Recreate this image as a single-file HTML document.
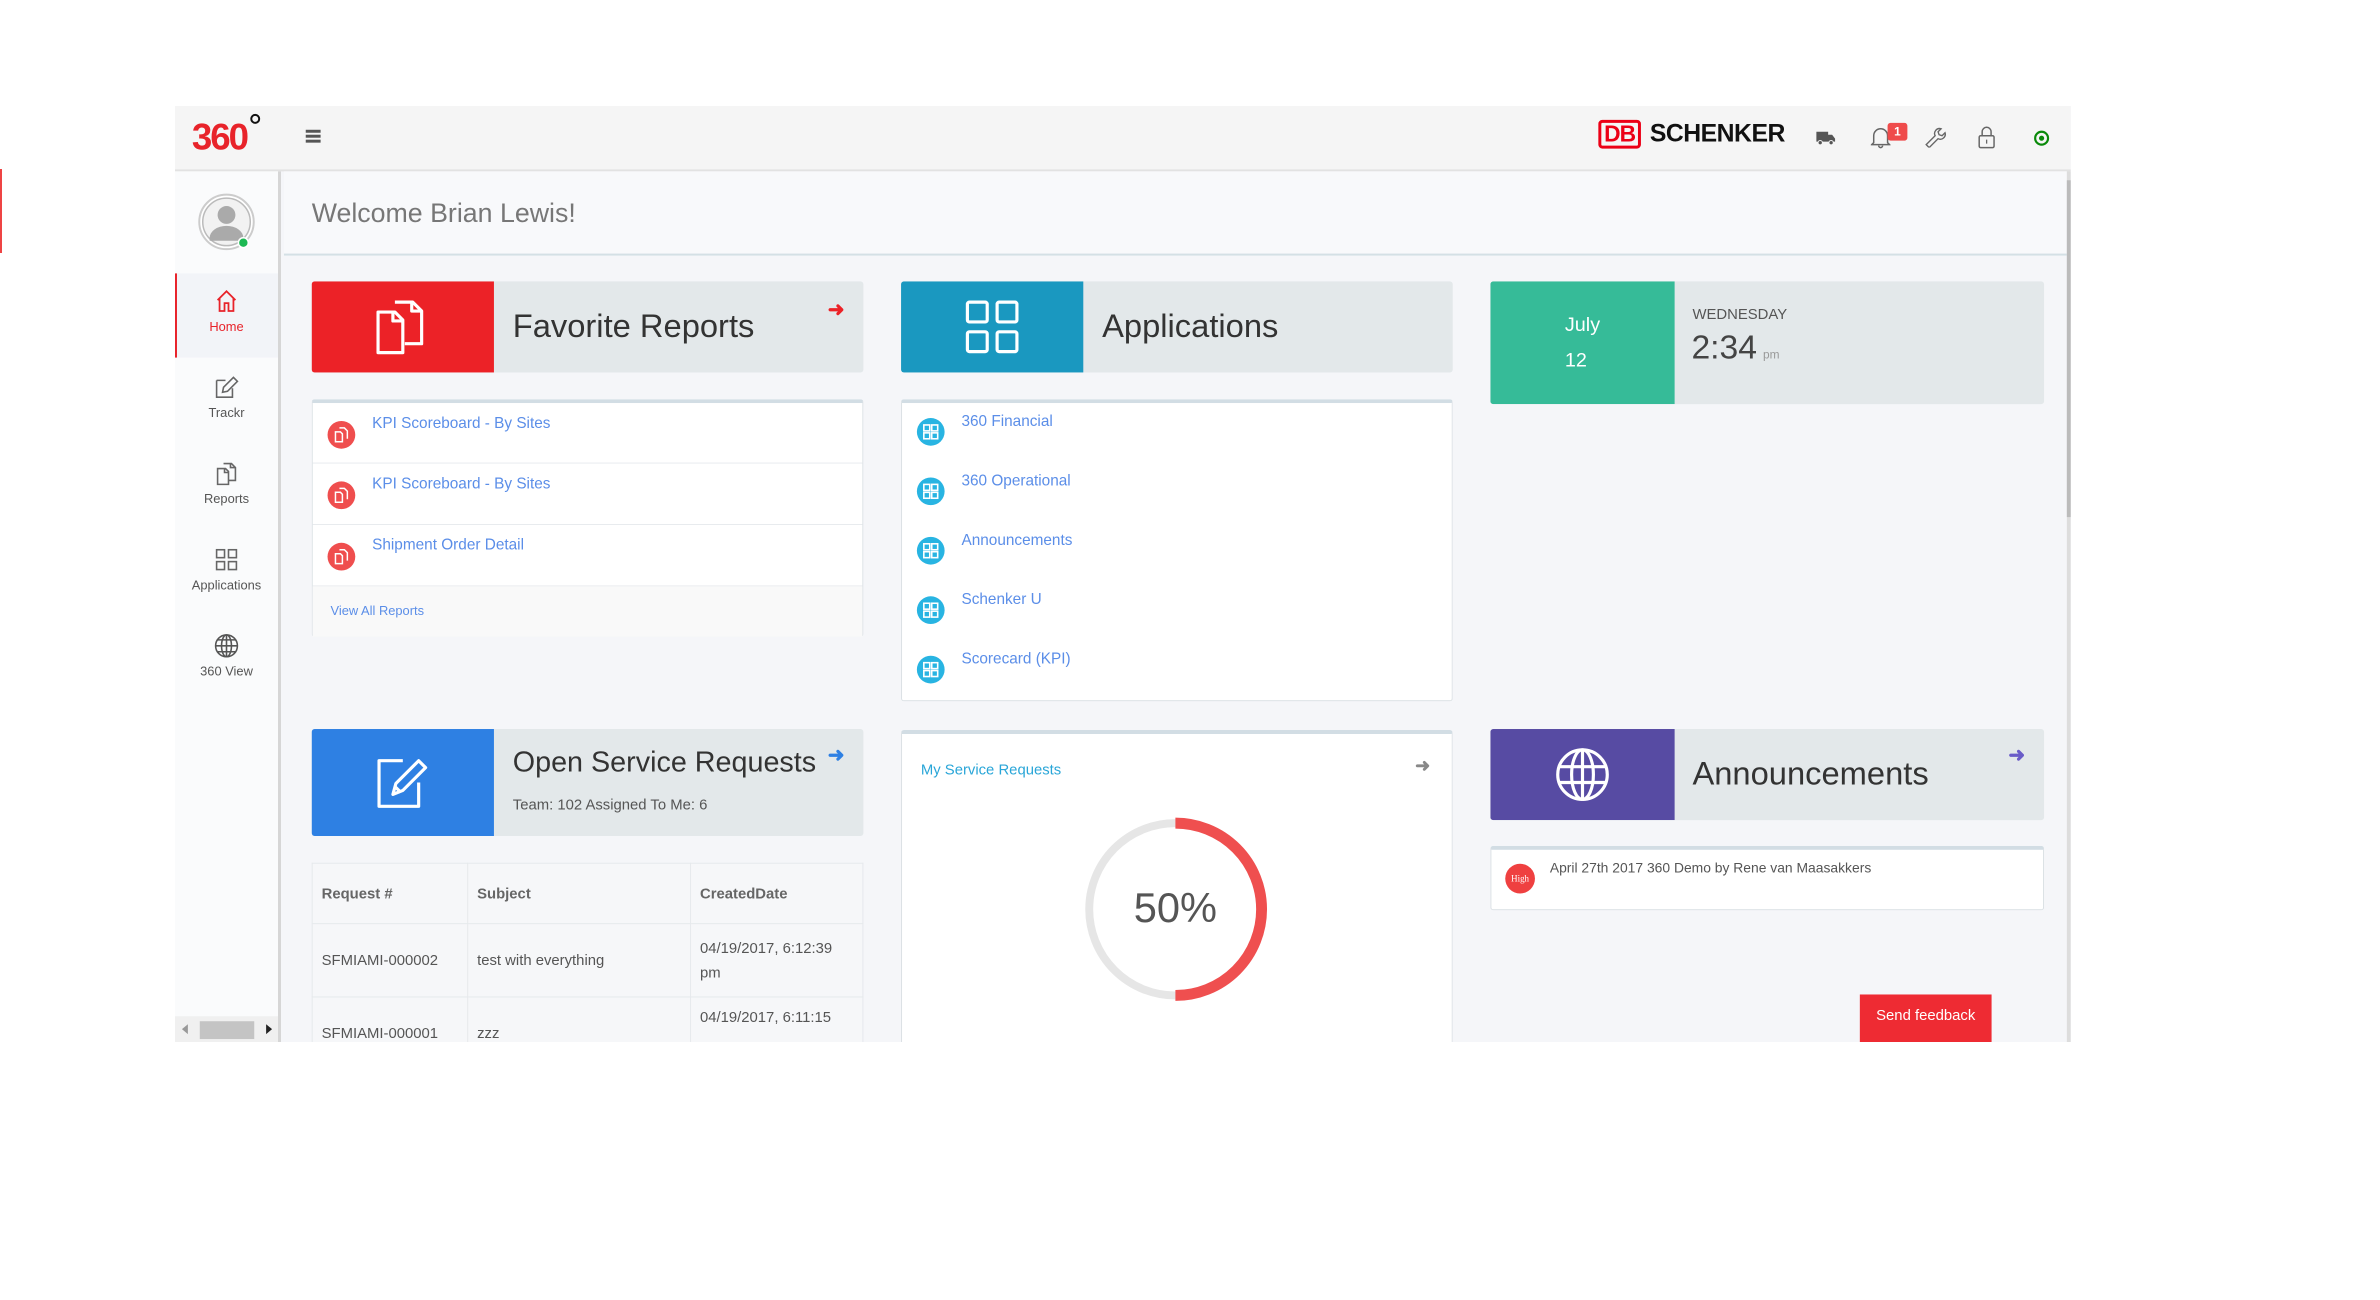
<!DOCTYPE html>
<html><head><meta charset="utf-8">
<style>
*{box-sizing:border-box;margin:0;padding:0}
body{width:2380px;height:1300px;background:#fff;position:relative;overflow:hidden;font-family:"Liberation Sans",sans-serif;}
.a{position:absolute}
#frame{left:175px;top:106px;width:1914px;height:945px;background:#f5f6f9;overflow:hidden;transform:scale(0.9905);transform-origin:0 0}
.hdr{left:0;top:0;width:1914px;height:66px;background:#f5f5f5;border-bottom:2px solid #e2e2e2}
.side{left:0;top:66px;width:107px;height:879px;background:#fafbfc;border-right:3px solid #d6d6d6}
.nav{left:0;width:104px;text-align:center;color:#555;font-size:13px}
.tile{height:92px;background:#e3e8ea;border-radius:3px;overflow:hidden}
.tile .ib{position:absolute;left:0;top:0;width:184px;height:100%;display:flex;align-items:center;justify-content:center}
.tile .t{position:absolute;left:203px;font-size:33px;color:#333}
.panel{background:#fff;border:1px solid #d9dfe3;border-top:4px solid #d2dde4;border-radius:3px}
.row{position:absolute;left:0;width:100%;border-bottom:1px solid #e8ebee}
.lnk{color:#5b8ee8;font-size:15.5px}
.ric{position:absolute;width:28px;height:28px;border-radius:50%;background:#ef4e4e;display:flex;align-items:center;justify-content:center}
.aic{position:absolute;width:28px;height:28px;border-radius:50%;background:#28b4e2;display:flex;align-items:center;justify-content:center}
td,th{border:1px solid #e6e9ec;padding:0 9px;font-size:15px;color:#555;text-align:left;vertical-align:middle}
th{font-weight:bold;color:#666}
</style></head><body>
<div class="a" style="left:0;top:169px;width:2px;height:84px;background:#e44"></div>
<div id="frame" class="a">
 <div class="a hdr">
  <div class="a" style="left:17px;top:11px;font-size:37px;font-weight:bold;color:#e8232a;letter-spacing:-2px">360</div>
  <div class="a" style="left:76px;top:8px;width:10px;height:10px;border:2.5px solid #111;border-radius:50%"></div>
  <div class="a" style="left:132px;top:24px;width:15px;height:3px;background:#555;box-shadow:0 5px 0 #555,0 10px 0 #555"></div>
  <div class="a" style="left:1437px;top:14px;width:43px;height:29px;border:3px solid #ec0016;border-radius:4px;color:#ec0016;font-weight:bold;font-size:23px;line-height:23px;text-align:center;letter-spacing:-1px">DB</div>
  <div class="a" style="left:1489px;top:14px;font-size:25px;font-weight:bold;color:#111;letter-spacing:-0.5px">SCHENKER</div>
  <svg class="a" style="left:1657px;top:24px" width="20" height="16" viewBox="0 0 20 16"><path d="M0 2h12v10H0zM12 5h4l3 4v3h-7z" fill="#555"/><circle cx="4" cy="13" r="2.2" fill="#555" stroke="#f5f5f5"/><circle cx="15" cy="13" r="2.2" fill="#555" stroke="#f5f5f5"/></svg>
  <svg class="a" style="left:1712px;top:21px" width="20" height="22" viewBox="0 0 20 22"><path d="M3 16V9a7 7 0 0114 0v7l2 2H1zM8 19a2 2 0 004 0" fill="none" stroke="#666" stroke-width="1.5"/></svg>
  <div class="a" style="left:1729px;top:17px;width:20px;height:18px;background:#ef4b4b;border-radius:3px;color:#fff;font-size:12px;font-weight:bold;text-align:center;line-height:18px">1</div>
  <svg class="a" style="left:1766px;top:20px" width="22" height="22" viewBox="0 0 22 22"><path d="M2 19l9-9a5 5 0 016-7l-3 3 1 3 3 1 3-3a5 5 0 01-7 6l-9 9z" fill="none" stroke="#666" stroke-width="1.4"/></svg>
  <svg class="a" style="left:1820px;top:20px" width="18" height="24" viewBox="0 0 18 24"><rect x="1.5" y="10" width="15" height="12" rx="1.5" fill="none" stroke="#666" stroke-width="1.5"/><path d="M4.5 10V6a4.5 4.5 0 019 0v4" fill="none" stroke="#666" stroke-width="1.5"/><path d="M9 14v4" stroke="#666" stroke-width="1.3"/></svg>
  <svg class="a" style="left:1876px;top:24px" width="17" height="17" viewBox="0 0 17 17"><circle cx="8.5" cy="8.5" r="6.5" fill="none" stroke="#0a8a0a" stroke-width="2.2"/><circle cx="8.5" cy="8.5" r="2.6" fill="#0a8a0a"/></svg>
 </div>
 <div class="a side">
  <svg class="a" style="left:23px;top:22px" width="58" height="58" viewBox="0 0 58 58"><circle cx="29" cy="29" r="27.5" fill="#fff" stroke="#ccc" stroke-width="2"/><circle cx="29" cy="29" r="24" fill="#f2f2f2" stroke="#bbb" stroke-width="1.5"/><circle cx="29" cy="22" r="9" fill="#aaa"/><path d="M12 45a17 12 0 0134 0v3H12z" fill="#aaa"/><circle cx="46" cy="50" r="5" fill="#1db954" stroke="#fff" stroke-width="1.5"/></svg>
  <div class="a" style="left:0;top:103px;width:104px;height:85px;background:#f2f4f8;border-left:2px solid #e8232a"></div>
  <div class="a nav" style="top:118px"><svg width="26" height="26" viewBox="0 0 26 26"><path d="M4 12L13 3l9 9M6 10v13h5v-8h4v8h5V10" fill="none" stroke="#e8232a" stroke-width="1.8"/></svg><div style="color:#e8232a;margin-top:2px">Home</div></div>
  <div class="a nav" style="top:205px"><svg width="26" height="26" viewBox="0 0 26 26"><path d="M3 6h9M3 6v17h16v-9" fill="none" stroke="#666" stroke-width="1.6"/><path d="M9 18l1-5 10-10 4 4-10 10z" fill="none" stroke="#666" stroke-width="1.6"/></svg><div style="margin-top:2px">Trackr</div></div>
  <div class="a nav" style="top:292px"><svg width="26" height="26" viewBox="0 0 26 26"><path d="M4 8h8l3 3v13H4z M11 8v4h4 M10 3h8l4 4v13h-7 M17 3v4h5" fill="none" stroke="#666" stroke-width="1.6"/></svg><div style="margin-top:2px">Reports</div></div>
  <div class="a nav" style="top:379px"><svg width="26" height="26" viewBox="0 0 26 26"><g fill="none" stroke="#666" stroke-width="1.6"><rect x="3" y="3" width="8" height="8"/><rect x="15" y="3" width="8" height="8"/><rect x="3" y="15" width="8" height="8"/><rect x="15" y="15" width="8" height="8"/></g></svg><div style="margin-top:2px">Applications</div></div>
  <div class="a nav" style="top:466px"><svg width="26" height="26" viewBox="0 0 26 26"><g fill="none" stroke="#555" stroke-width="1.6"><circle cx="13" cy="13" r="11"/><ellipse cx="13" cy="13" rx="5" ry="11"/><path d="M2 13h22M4 7h18M4 19h18M13 2v22"/></g></svg><div style="margin-top:2px">360 View</div></div>
  <div class="a" style="left:0;top:853px;width:104px;height:26px;background:#f0f0f0"><div class="a" style="left:7px;top:8px;border:5px solid transparent;border-right:6px solid #999;border-left:0"></div><div class="a" style="left:25px;top:5px;width:55px;height:18px;background:#c4c4c4"></div><div class="a" style="left:92px;top:8px;border:5px solid transparent;border-left:6px solid #222;border-right:0"></div></div>
 </div>
 <div class="a" style="left:110px;top:66px;width:1800px;height:85px;background:#f8f9fb;border-bottom:2px solid #d4e0e5"></div>
 <div class="a" style="left:138px;top:93px;font-size:27px;color:#777">Welcome Brian Lewis!</div>
 <div class="a" style="left:1910px;top:66px;width:4px;height:879px;background:#ddd"></div>
 <div class="a" style="left:1910px;top:75px;width:4px;height:340px;background:#bbb"></div>

 <div class="a tile" style="left:138px;top:177px;width:557px">
  <div class="ib" style="background:#ec2227"><svg width="56" height="56" viewBox="0 0 56 56"><path d="M3 13h17l8 8v33H3z M18 13v9h10 M20 3h18l9 9v33H30 M37 3v9h10" fill="none" stroke="#fff" stroke-width="3.2" stroke-linejoin="round"/></svg></div>
  <div class="t" style="top:26px">Favorite Reports</div>
  <div class="a" style="left:521px;top:16px;color:#ec2227;font-size:20px;font-weight:bold">➜</div>
 </div>
 <div class="a panel" style="left:138px;top:296px;width:557px;height:240px">
  <div class="row" style="top:0;height:61px"><div class="ric" style="left:15px;top:18px"><svg width="16" height="16" viewBox="0 0 16 16"><path d="M2 5h5l2 2v8H2zM6 1h5l3 3v8" fill="none" stroke="#fff" stroke-width="1.5"/></svg></div><div class="a lnk" style="left:60px;top:12px">KPI Scoreboard - By Sites</div></div>
  <div class="row" style="top:61px;height:62px"><div class="ric" style="left:15px;top:18px"><svg width="16" height="16" viewBox="0 0 16 16"><path d="M2 5h5l2 2v8H2zM6 1h5l3 3v8" fill="none" stroke="#fff" stroke-width="1.5"/></svg></div><div class="a lnk" style="left:60px;top:12px">KPI Scoreboard - By Sites</div></div>
  <div class="row" style="top:123px;height:62px"><div class="ric" style="left:15px;top:18px"><svg width="16" height="16" viewBox="0 0 16 16"><path d="M2 5h5l2 2v8H2zM6 1h5l3 3v8" fill="none" stroke="#fff" stroke-width="1.5"/></svg></div><div class="a lnk" style="left:60px;top:12px">Shipment Order Detail</div></div>
  <div class="a" style="left:0;top:185px;width:100%;height:51px;background:#f9f9f9"><div class="a" style="left:18px;top:17px;color:#5b8ee8;font-size:13px">View All Reports</div></div>
 </div>

 <div class="a tile" style="left:733px;top:177px;width:557px">
  <div class="ib" style="background:#1a98c0"><svg width="56" height="56" viewBox="0 0 56 56"><g fill="none" stroke="#fff" stroke-width="3.2"><rect x="3" y="3" width="20" height="20" rx="2"/><rect x="33" y="3" width="20" height="20" rx="2"/><rect x="3" y="33" width="20" height="20" rx="2"/><rect x="33" y="33" width="20" height="20" rx="2"/></g></svg></div>
  <div class="t" style="top:26px">Applications</div>
 </div>
 <div class="a panel" style="left:733px;top:296px;width:557px;height:305px">
  <div class="aic" style="left:15px;top:15px"><svg width="16" height="16" viewBox="0 0 16 16"><g fill="none" stroke="#fff" stroke-width="1.6"><rect x="1" y="1" width="6" height="6"/><rect x="9" y="1" width="6" height="6"/><rect x="1" y="9" width="6" height="6"/><rect x="9" y="9" width="6" height="6"/></g></svg></div><div class="a lnk" style="left:60px;top:10px">360 Financial</div>
  <div class="aic" style="left:15px;top:75px"><svg width="16" height="16" viewBox="0 0 16 16"><g fill="none" stroke="#fff" stroke-width="1.6"><rect x="1" y="1" width="6" height="6"/><rect x="9" y="1" width="6" height="6"/><rect x="1" y="9" width="6" height="6"/><rect x="9" y="9" width="6" height="6"/></g></svg></div><div class="a lnk" style="left:60px;top:70px">360 Operational</div>
  <div class="aic" style="left:15px;top:135px"><svg width="16" height="16" viewBox="0 0 16 16"><g fill="none" stroke="#fff" stroke-width="1.6"><rect x="1" y="1" width="6" height="6"/><rect x="9" y="1" width="6" height="6"/><rect x="1" y="9" width="6" height="6"/><rect x="9" y="9" width="6" height="6"/></g></svg></div><div class="a lnk" style="left:60px;top:130px">Announcements</div>
  <div class="aic" style="left:15px;top:195px"><svg width="16" height="16" viewBox="0 0 16 16"><g fill="none" stroke="#fff" stroke-width="1.6"><rect x="1" y="1" width="6" height="6"/><rect x="9" y="1" width="6" height="6"/><rect x="1" y="9" width="6" height="6"/><rect x="9" y="9" width="6" height="6"/></g></svg></div><div class="a lnk" style="left:60px;top:190px">Schenker U</div>
  <div class="aic" style="left:15px;top:255px"><svg width="16" height="16" viewBox="0 0 16 16"><g fill="none" stroke="#fff" stroke-width="1.6"><rect x="1" y="1" width="6" height="6"/><rect x="9" y="1" width="6" height="6"/><rect x="1" y="9" width="6" height="6"/><rect x="9" y="9" width="6" height="6"/></g></svg></div><div class="a lnk" style="left:60px;top:250px">Scorecard (KPI)</div>
 </div>

 <div class="a tile" style="left:1328px;top:177px;width:559px;height:124px">
  <div class="ib" style="background:#36bb98;flex-direction:column;color:#fff;font-size:20px;line-height:36px;width:186px">July<br>12</div>
  <div class="a" style="left:204px;top:25px;font-size:15px;color:#555">WEDNESDAY</div>
  <div class="a" style="left:203px;top:48px;font-size:34px;color:#444">2:34<span style="font-size:12px;color:#999;margin-left:6px">pm</span></div>
 </div>

 <div class="a tile" style="left:138px;top:629px;width:557px;height:108px">
  <div class="ib" style="background:#2e80e3"><svg width="56" height="56" viewBox="0 0 56 56"><path d="M28 6H4v46h40V28" fill="none" stroke="#fff" stroke-width="3.2" stroke-linejoin="round"/><path d="M18 40l3-11 23-23 7 7-23 23z M20 32l6 6" fill="none" stroke="#fff" stroke-width="3.2" stroke-linejoin="round"/></svg></div>
  <div class="t" style="top:18px;font-size:29px">Open Service Requests</div>
  <div class="a" style="left:203px;top:68px;font-size:15px;color:#555">Team: 102 Assigned To Me: 6</div>
  <div class="a" style="left:521px;top:14px;color:#2e80e3;font-size:20px;font-weight:bold">➜</div>
 </div>
 <table class="a" style="left:138px;top:764px;width:557px;border-collapse:collapse;background:#f6f7f9">
  <tr style="height:61px"><th style="width:157px">Request #</th><th style="width:225px">Subject</th><th>CreatedDate</th></tr>
  <tr style="height:74px"><td>SFMIAMI-000002</td><td>test with everything</td><td style="line-height:25px">04/19/2017, 6:12:39 pm</td></tr>
  <tr style="height:74px"><td style="vertical-align:top;padding-top:28px">SFMIAMI-000001</td><td style="vertical-align:top;padding-top:28px">zzz</td><td style="vertical-align:top;padding-top:12px">04/19/2017, 6:11:15</td></tr>
 </table>

 <div class="a panel" style="left:733px;top:630px;width:557px;height:330px">
  <div class="a" style="left:19px;top:28px;color:#2aa6d8;font-size:15px">My Service Requests</div>
  <div class="a" style="left:518px;top:22px;color:#888;font-size:18px;font-weight:bold">➜</div>
  <svg class="a" style="left:181px;top:82px" width="190" height="190" viewBox="0 0 190 190"><circle cx="95" cy="95" r="87" fill="none" stroke="#e6e6e6" stroke-width="8"/><path d="M95 8a87 87 0 010 174" fill="none" stroke="#ef4f4f" stroke-width="11"/><text x="95" y="108" text-anchor="middle" font-family="Liberation Sans" font-size="42" fill="#555">50%</text></svg>
 </div>

 <div class="a tile" style="left:1328px;top:629px;width:559px;height:92px">
  <div class="ib" style="background:#574ba3;width:186px"><svg width="56" height="56" viewBox="0 0 56 56"><g fill="none" stroke="#fff" stroke-width="3.2"><circle cx="28" cy="28" r="25"/><ellipse cx="28" cy="28" rx="11" ry="25"/><path d="M28 3v50M4 20h48M4 36h48"/></g></svg></div>
  <div class="t" style="top:26px;left:204px">Announcements</div>
  <div class="a" style="left:523px;top:14px;color:#6a5cc8;font-size:20px;font-weight:bold">➜</div>
 </div>
 <div class="a panel" style="left:1328px;top:747px;width:559px;height:65px">
  <div class="a" style="left:14px;top:14px;width:30px;height:30px;border-radius:50%;background:#ef4040;color:#fff;font-size:9px;font-family:'Liberation Serif',serif;text-align:center;line-height:30px">High</div>
  <div class="a" style="left:59px;top:10px;font-size:14px;color:#555">April 27th 2017 360 Demo by Rene van Maasakkers</div>
 </div>
 <div class="a" style="left:1701px;top:897px;width:133px;height:48px;background:#ee2b33;color:#fff;font-size:15px;text-align:center;line-height:44px">Send feedback</div>
</div>
</body></html>
